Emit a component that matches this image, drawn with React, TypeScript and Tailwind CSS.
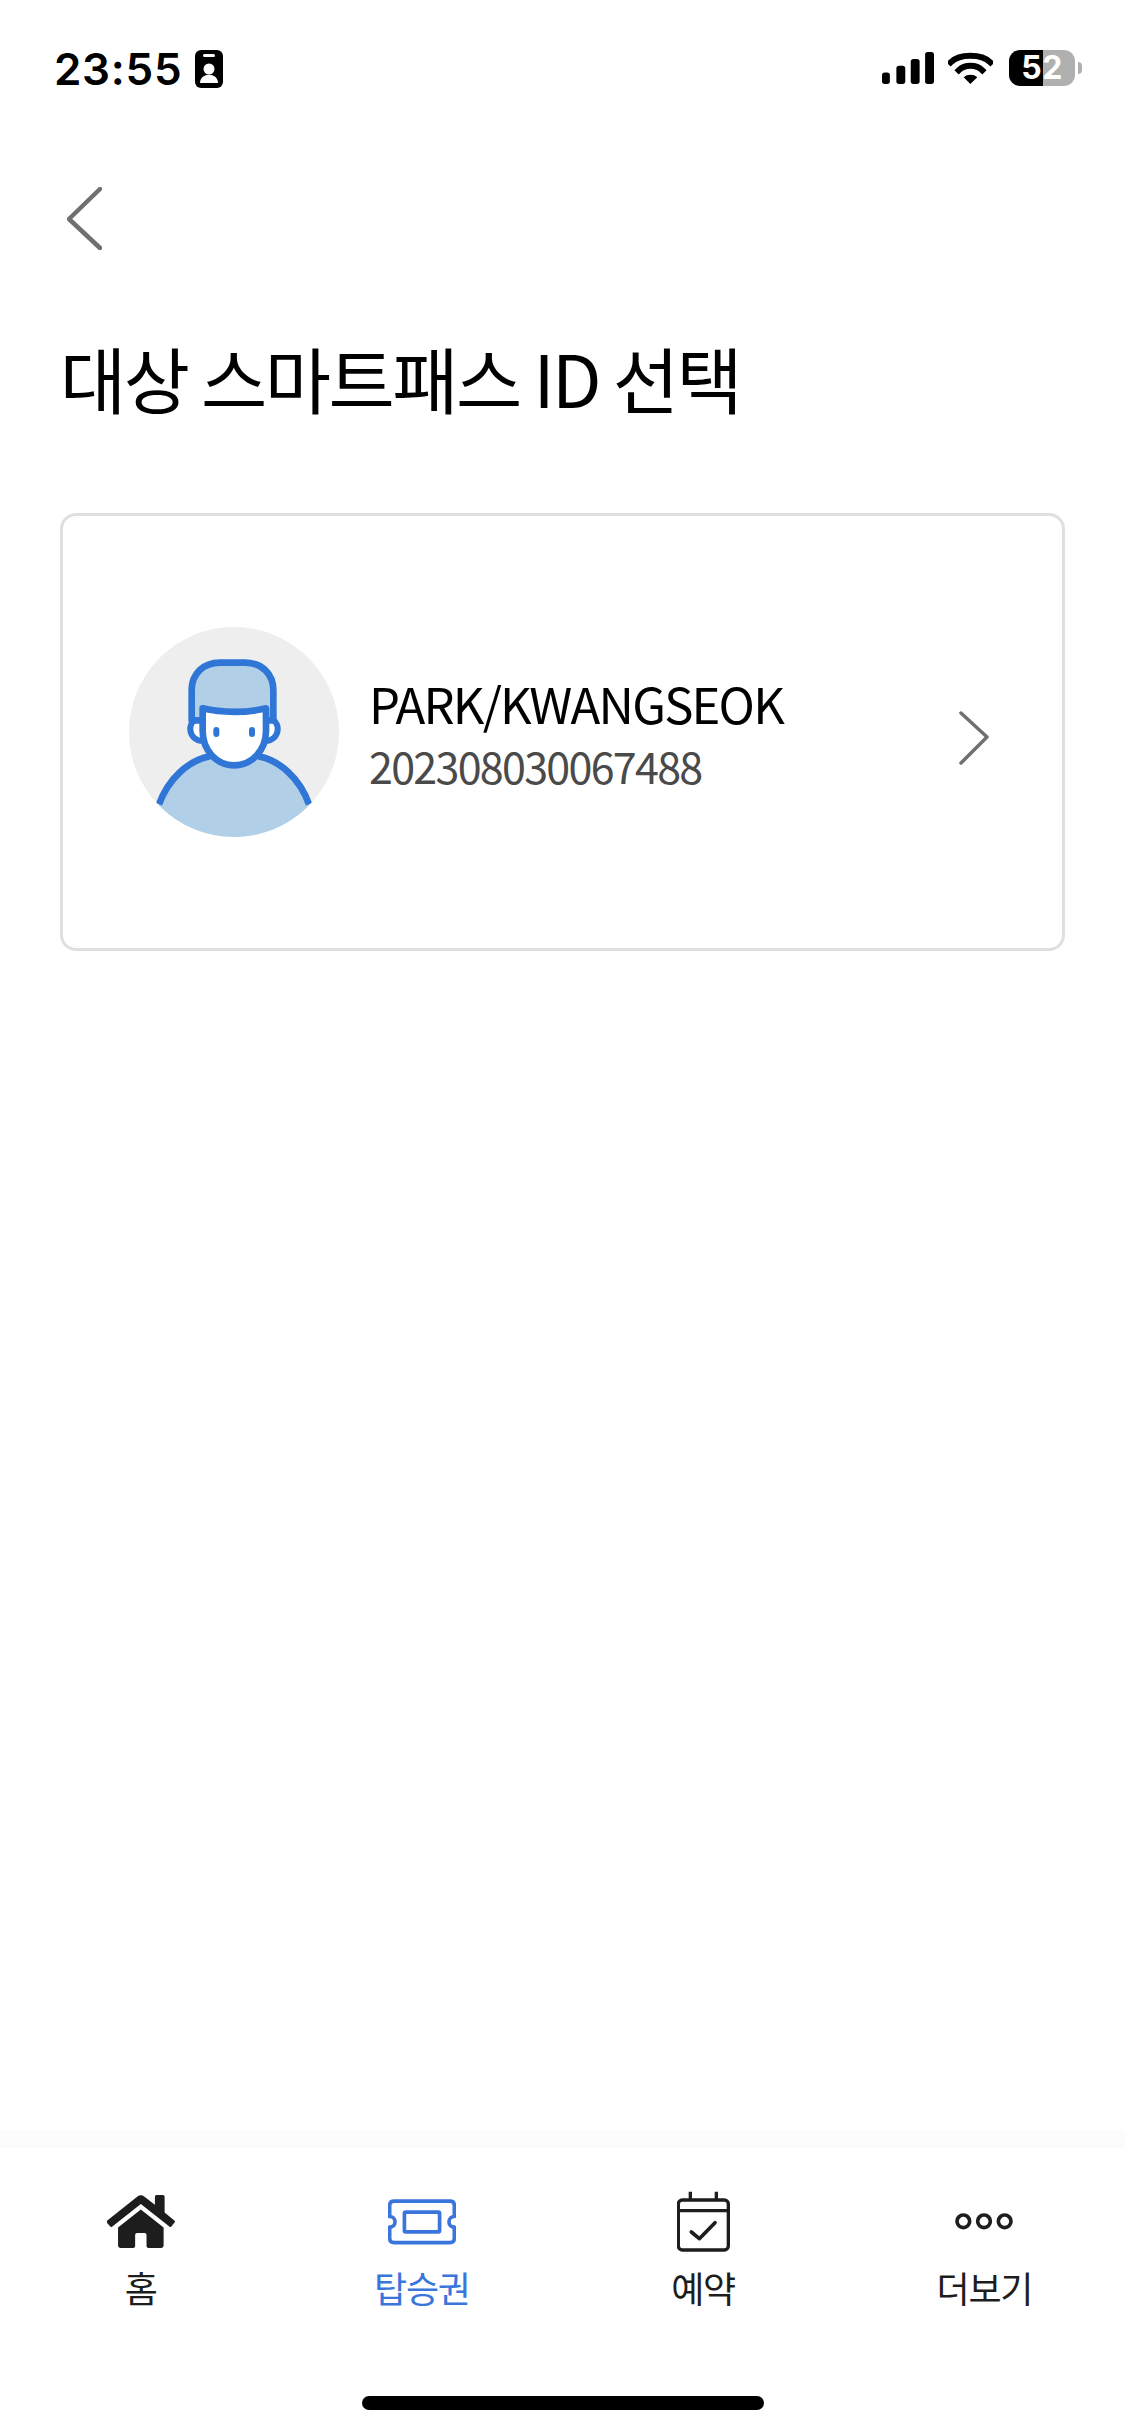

const KR = { fontFamily: '"Noto Sans CJK KR", "Noto Sans", sans-serif' };

function Signal() {
  return (
    <svg width="52" height="32" viewBox="172 100 152 93" className="block">
      <rect x="172" y="160" width="23" height="33" rx="8" fill="#000" />
      <rect x="214" y="140" width="26" height="53" rx="8" fill="#000" />
      <rect x="256" y="120" width="26" height="73" rx="8" fill="#000" />
      <rect x="298" y="100" width="26" height="93" rx="8" fill="#000" />
    </svg>
  );
}

function Wifi() {
  return (
    <svg width="45" height="32" viewBox="370 97 135 96" className="block">
      <path d="M378 128 C 405 102 470 102 497 128" fill="none" stroke="#000" strokeWidth="18" strokeLinecap="square" />
      <path d="M402 152 C 420 134 455 134 473 152" fill="none" stroke="#000" strokeWidth="18" strokeLinecap="square" />
      <path d="M437 193 L 417 173 C 428 163 447 163 458 173 Z" fill="#000" />
    </svg>
  );
}

function Avatar() {
  return (
    <svg width="210" height="210" viewBox="57 50 630 630" className="block shrink-0">
      <defs>
        <clipPath id="avatar-clip">
          <circle cx="372" cy="365" r="315" />
        </clipPath>
      </defs>
      <circle cx="372" cy="365" r="315" fill="#eeeeee" />
      <g clipPath="url(#avatar-clip)">
        <path d="M147 582 C 175 505 235 450 300 438 L 445 438 C 510 450 570 505 597 582 L 640 720 L 100 720 Z" fill="#b1cfe7" />
        <path d="M147 582 C 175 505 235 450 300 438 M 445 438 C 510 450 570 505 597 582" fill="none" stroke="#3076d6" strokeWidth="20" />
      </g>
      <path d="M268 326 C 230 326 230 392 280 392" fill="#fff" stroke="#3076d6" strokeWidth="18" />
      <path d="M476 326 C 514 326 514 392 464 392" fill="#fff" stroke="#3076d6" strokeWidth="18" />
      <path d="M245 330 V 240 C 245 190 280 157 330 157 H 405 C 455 157 490 190 490 240 V 330 Z" fill="#b1cfe7" stroke="#3076d6" strokeWidth="20" strokeLinejoin="round" />
      <path d="M278 294 C 335 308 410 308 468 294 V 362 C 468 420 425 465 372 465 C 320 465 278 420 278 362 Z" fill="#fff" stroke="#3076d6" strokeWidth="20" strokeLinejoin="round" />
      <rect x="310" y="350" width="18" height="30" rx="9" fill="#3076d6" />
      <rect x="417" y="350" width="18" height="30" rx="9" fill="#3076d6" />
    </svg>
  );
}

function HomeIcon() {
  return (
    <svg width="68" height="53" viewBox="142 195 203 158" className="block">
      <path d="M142 272 L 232 200 Q 243 192 254 200 L 285 224 V 200 Q 285 195 290 195 H 309 Q 314 195 314 200 V 247 L 344 272 Q 346 275 343 278 L 334 289 Q 331 292 328 289 L 243 222 L 158 289 Q 155 292 152 289 L 143 279 Q 140 275 142 272 Z" fill="#1d1d1d" />
      <path d="M243 238 L 311 292 V 346 Q 311 353 304 353 H 266 Q 260 353 260 347 V 314 Q 260 308 254 308 H 232 Q 226 308 226 314 V 347 Q 226 353 220 353 H 182 Q 175 353 175 346 V 292 Z" fill="#1d1d1d" />
    </svg>
  );
}

function TicketIcon() {
  return (
    <svg width="68" height="46" viewBox="984 207 203 135" className="block">
      <path d="M1002 212 H 1169 Q 1182 212 1182 225 V 258 A 16 16 0 0 0 1182 290 V 323 Q 1182 336 1169 336 H 1002 Q 989 336 989 323 V 290 A 16 16 0 0 0 989 258 V 225 Q 989 212 1002 212 Z" fill="none" stroke="#3a75db" strokeWidth="11" strokeLinejoin="round" />
      <rect x="1033" y="245" width="105" height="59" rx="4" fill="none" stroke="#3a75db" strokeWidth="11" />
    </svg>
  );
}

function CalendarIcon() {
  return (
    <svg width="53" height="61" viewBox="171 184 159 183" className="block">
      <rect x="175" y="211" width="150" height="150" rx="12" fill="none" stroke="#1d1d1d" strokeWidth="10" />
      <path d="M175 243 H 325 M 211 186 V 211 M 289 186 V 211" fill="none" stroke="#1d1d1d" strokeWidth="10" />
      <path d="M214 307 L 238 327 L 285 279" fill="none" stroke="#1d1d1d" strokeWidth="11" strokeLinecap="round" strokeLinejoin="round" />
    </svg>
  );
}

function DotsIcon() {
  return (
    <svg width="58" height="17" viewBox="1004 248 174 51" className="block">
      <circle cx="1029" cy="273" r="19" fill="none" stroke="#1d1d1d" strokeWidth="11" />
      <circle cx="1091" cy="273" r="19" fill="none" stroke="#1d1d1d" strokeWidth="11" />
      <circle cx="1153" cy="273" r="19" fill="none" stroke="#1d1d1d" strokeWidth="11" />
    </svg>
  );
}

function NavItem({ icon, label, active }: { icon: React.ReactNode; label: string; active?: boolean }) {
  return (
    <div className="flex flex-col items-center">
      <div className="flex h-[61px] items-center justify-center">{icon}</div>
      <span
        style={KR}
        className={`mt-[10px] text-[36px] leading-[50px] tracking-[-1.2px] ${active ? "text-[#3a75db]" : "text-[#1d1d1d]"}`}
      >
        {label}
      </span>
    </div>
  );
}

export default function App() {
  return (
    <div className="flex h-[2436px] w-[1125px] flex-col overflow-hidden bg-white">
      <div className="flex h-[88px] items-start justify-between pl-[54px] pr-[43px] pt-[50px]">
        <div className="flex items-center gap-[13px]">
          <span style={{ fontFamily: 'Inter, sans-serif' }} className="text-[44px] font-semibold leading-[38px] tracking-[0.7px] text-black">
            23:55
          </span>
          <svg width="28" height="38" viewBox="0 0 28 38" className="block">
            <rect width="28" height="38" rx="6" fill="#000" />
            <rect x="8" y="4" width="12" height="3" rx="1.5" fill="#fff" />
            <circle cx="14" cy="19" r="5.5" fill="#fff" />
            <path d="M5 33 C 5 22 23 22 23 33 Z" fill="#fff" />
          </svg>
        </div>
        <div className="flex items-center">
          <Signal />
          <div className="ml-[14px]"><Wifi /></div>
          <div className="relative ml-[16px] flex h-[36px] w-[66px]">
            <div className="h-full w-[34px] rounded-l-[11px] bg-black" />
            <div className="h-full w-[32px] rounded-r-[11px] bg-[#b0b0b0]" />
            <span style={{ fontFamily: 'Inter, sans-serif' }} className="absolute inset-0 flex items-center justify-center text-[32px] font-bold leading-[36px] tracking-[0.5px] text-white">
              52
            </span>
          </div>
          <div className="ml-[3px] h-[12px] w-[4px] rounded-r-full bg-[#b0b0b0]" />
        </div>
      </div>

      <div className="pl-[67px] pt-[99px]">
        <svg width="35" height="63" viewBox="66 187 35 63" className="block">
          <path d="M99 189 L 68 219 L 99 248" fill="none" stroke="#6f7071" strokeWidth="4.5" strokeLinecap="round" strokeLinejoin="round" />
        </svg>
      </div>

      <h1 style={KR} className="mt-[75px] pl-[60px] text-[72px] font-normal leading-[104px] tracking-[-2.5px] text-black">
        대상 스마트패스 ID 선택
      </h1>

      <div className="mx-[60px] mt-[84px] flex h-[438px] items-center rounded-[16px] border-[3px] border-[#dfdfdf] pl-[66px] pr-[73px]">
        <Avatar />
        <div className="ml-[30px] flex-1">
          <div style={KR} className="text-[49px] leading-[62px] tracking-[-1.8px] text-black">PARK/KWANGSEOK</div>
          <div style={KR} className="mt-[3px] text-[43px] leading-[56px] tracking-[-1.7px] text-[#4a4a4a]">202308030067488</div>
        </div>
        <svg width="30" height="54" viewBox="957 710 30 54" className="mt-[12px] block shrink-0">
          <path d="M959 712 L 985 736 L 959 762" fill="none" stroke="#6f7071" strokeWidth="3.5" strokeLinecap="round" strokeLinejoin="round" />
        </svg>
      </div>

      <div className="mt-auto bg-[linear-gradient(to_bottom,#fcfcfc,#ededed)] pt-[18px]">
        <div className="h-[288px] bg-white pt-[43px]">
          <div className="grid grid-cols-4">
            <NavItem icon={<HomeIcon />} label="홈" />
            <NavItem icon={<TicketIcon />} label="탑승권" active />
            <NavItem icon={<CalendarIcon />} label="예약" />
            <NavItem icon={<DotsIcon />} label="더보기" />
          </div>
          <div className="ml-[362px] mt-[84px] h-[14px] w-[402px] rounded-full bg-black" />
        </div>
      </div>
    </div>
  );
}
